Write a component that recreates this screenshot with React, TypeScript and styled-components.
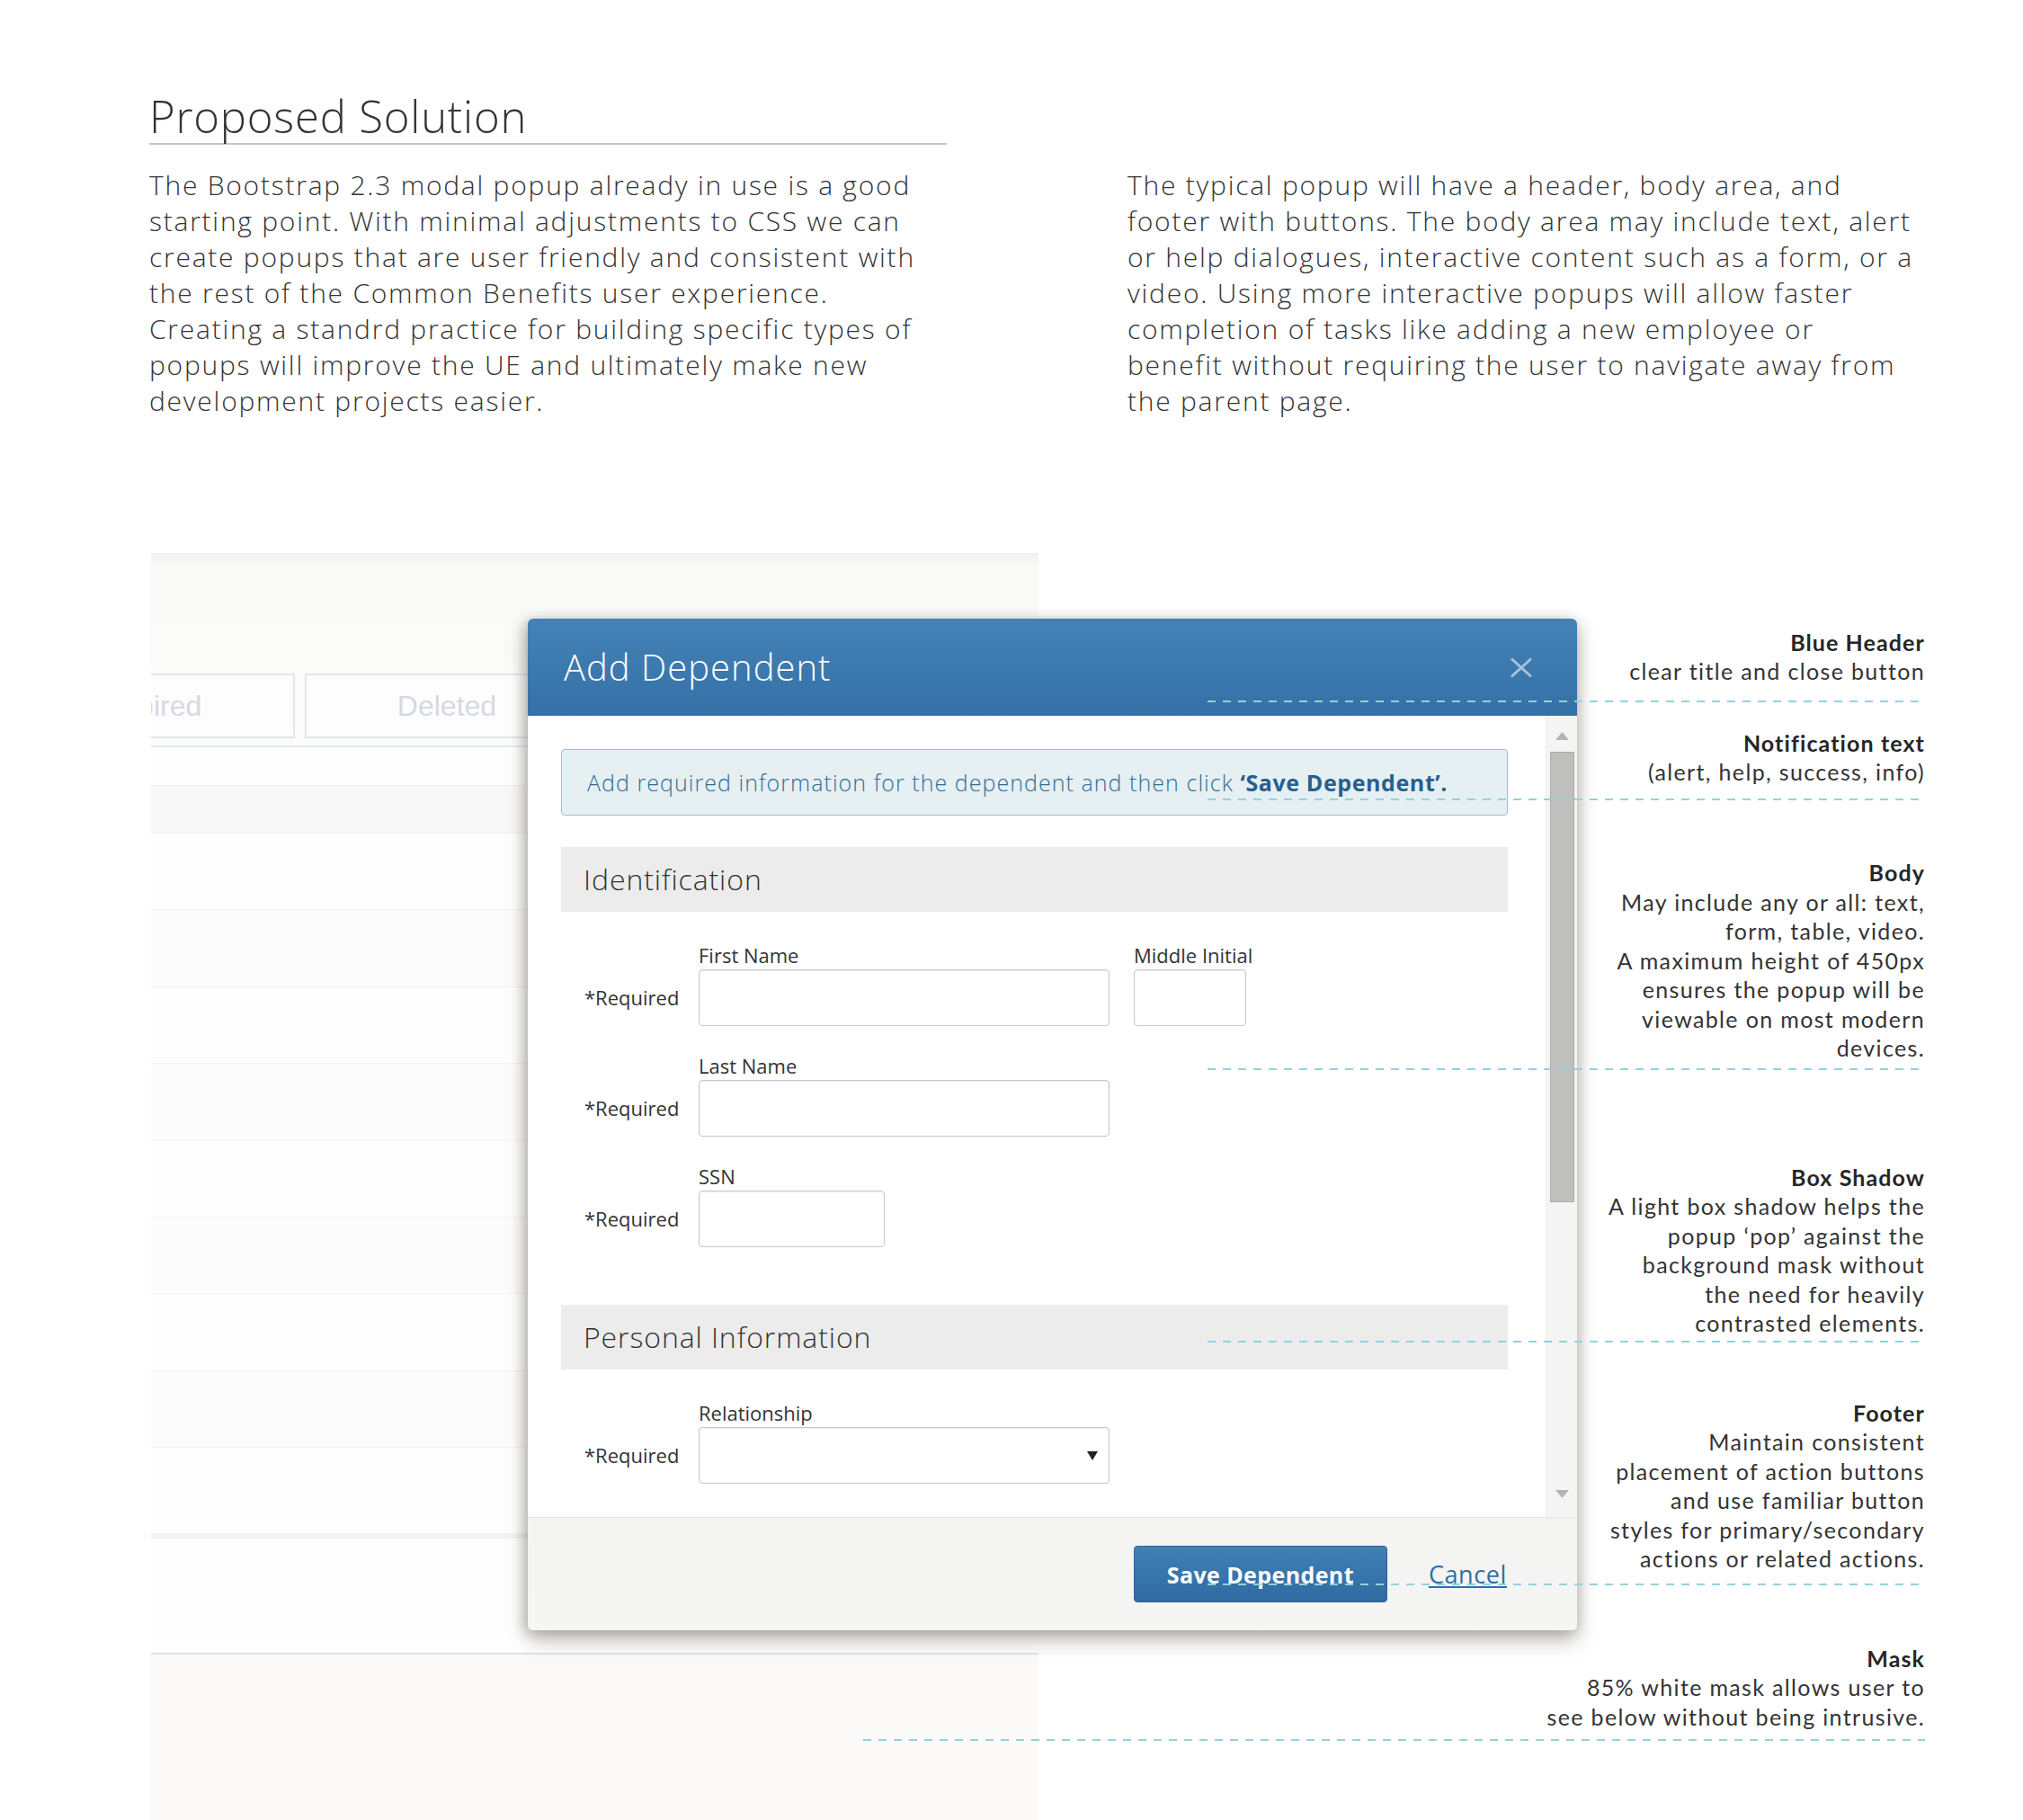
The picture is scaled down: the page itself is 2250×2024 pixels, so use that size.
import React from "react";
import styled, { createGlobalStyle } from "styled-components";

const GlobalStyle = createGlobalStyle`
  html, body { margin: 0; padding: 0; background: #ffffff; overflow: hidden; }
  body { font-family: "Open Sans", "Liberation Sans", sans-serif; color: #333333; }
  *, *::before, *::after { box-sizing: border-box; }
`;

const Page = styled.div`
  width: 2250px;
  height: 2024px;
  overflow: hidden;
  background: #ffffff;
`;

/* ---------- intro ---------- */

const Intro = styled.section`
  display: grid;
  grid-template-columns: 887px 887px;
  column-gap: 201px;
  padding-left: 166px;
`;

const Title = styled.h1`
  grid-column: 1;
  grid-row: 1;
  margin: 0;
  padding-top: 100px;
  font-family: "Open Sans", "Liberation Sans", sans-serif;
  font-weight: 300;
  font-size: 49px;
  line-height: 59px;
  letter-spacing: 0.8px;
  color: #333333;
  border-bottom: 2px solid #c4c4c4;
`;

const Paragraph = styled.p<{ $col: number }>`
  grid-column: ${(p) => p.$col};
  grid-row: 2;
  margin: 25px 0 0;
  font-family: "Open Sans", "Liberation Sans", sans-serif;
  font-weight: 300;
  font-size: 30px;
  line-height: 40px;
  letter-spacing: 1.75px;
  color: #333333;
  white-space: nowrap;
`;

/* ---------- stage ---------- */

const Stage = styled.div`
  position: relative;
  margin-top: 149px;
`;

/* faded application page behind the mask */

const MockApp = styled.div`
  margin-left: 168px;
  width: 987px;
  height: 1409px;
  background: #fcfcfb;
  overflow: hidden;
  display: flex;
  flex-direction: column;
`;

const MockTop = styled.div`
  height: 134px;
  flex: none;
  background: linear-gradient(#f0f0ef 0px, #f9f9f8 14px, #fbfbfa 100%);
`;

const MockTabs = styled.div`
  display: flex;
  gap: 11px;
  height: 72px;
  flex: none;
  margin-left: -156px;
`;

const MockTab = styled.div`
  flex: 0 0 316px;
  border: 2px solid #e2e6ec;
  background: #fdfdfd;
  display: flex;
  align-items: center;
  justify-content: center;
  font-family: "Liberation Sans", Arial, sans-serif;
  font-size: 32px;
  color: #d5d9e2;
`;

const MockTabLine = styled.div`
  margin-top: 8px;
  height: 2px;
  flex: none;
  background: #e7eaee;
`;

const MockGap = styled.div<{ $h: number }>`
  height: ${(p) => p.$h}px;
  flex: none;
  background: #fefefe;
`;

const MockBand = styled.div`
  height: 54px;
  flex: none;
  background: #f8f8f8;
  border-top: 1px solid #efefef;
  border-bottom: 1px solid #efefef;
`;

const MockRow = styled.div<{ $alt: boolean }>`
  height: 85.4px;
  flex: none;
  background: ${(p) => (p.$alt ? "#fdfcfd" : "#fefefe")};
  border-bottom: 1px solid #f3f2f2;
`;

const MockRule = styled.div<{ $h: number; $c: string }>`
  height: ${(p) => p.$h}px;
  flex: none;
  background: ${(p) => p.$c};
`;

const MockBottom = styled.div`
  flex: 1;
  background: #fbfaf9;
`;

/* ---------- modal ---------- */

const Modal = styled.div`
  position: absolute;
  left: 587px;
  top: 73px;
  width: 1167px;
  height: 1125px;
  background: #ffffff;
  border-radius: 6px;
  overflow: hidden;
  display: flex;
  flex-direction: column;
  box-shadow: 0 12px 22px rgba(95, 85, 75, 0.35), -5px 2px 14px rgba(95, 85, 75, 0.28),
    5px 2px 14px rgba(95, 85, 75, 0.12);
`;

const ModalHeader = styled.header`
  height: 108px;
  flex: none;
  display: flex;
  align-items: center;
  justify-content: space-between;
  padding: 0 49px 0 40px;
  background: linear-gradient(#4381b6, #3571a7);
`;

const ModalTitle = styled.h2`
  margin: 0;
  font-family: "Open Sans", "Liberation Sans", sans-serif;
  font-weight: 300;
  font-size: 40px;
  line-height: 108px;
  letter-spacing: 1px;
  color: #ffffff;
`;

const CloseButton = styled.button`
  width: 26px;
  height: 23px;
  padding: 0;
  border: none;
  background: none;
  display: block;
  cursor: pointer;
  svg { display: block; }
`;

const ModalBody = styled.div`
  flex: 1;
  display: flex;
  min-height: 0;
`;

const BodyContent = styled.div`
  flex: 1;
  padding: 37px 42px 0 37px;
  overflow: hidden;
`;

const Alert = styled.div`
  height: 74px;
  border: 1px solid #95c3d2;
  border-radius: 4px;
  background: #e6eff2;
  padding: 0 28px;
  font-family: "Open Sans", "Liberation Sans", sans-serif;
  font-weight: 300;
  font-size: 25px;
  line-height: 72px;
  letter-spacing: 1.05px;
  color: #2f6e98;
  white-space: nowrap;
  strong { font-weight: 700; color: #265f8d; letter-spacing: 0.6px; }
`;

const Section = styled.section<{ $mt: number }>`
  margin-top: ${(p) => p.$mt}px;
`;

const SectionBand = styled.h3`
  margin: 0;
  height: 72px;
  padding-left: 25px;
  background: #ececec;
  font-family: "Open Sans", "Liberation Sans", sans-serif;
  font-weight: 300;
  font-size: 32px;
  line-height: 72px;
  letter-spacing: 0.9px;
  color: #333333;
`;

const FieldList = styled.div`
  padding-top: 32.5px;
  display: flex;
  flex-direction: column;
  gap: 28.5px;
`;

const FieldRow = styled.div`
  display: flex;
  align-items: flex-end;
  padding-left: 26px;
`;

const ReqLabel = styled.span`
  width: 127px;
  flex: none;
  height: 63px;
  line-height: 63px;
  font-size: 22px;
  color: #333333;
  white-space: nowrap;
`;

const FieldGroup = styled.div`
  display: flex;
  gap: 27px;
`;

const Field = styled.label`
  display: flex;
  flex-direction: column;
`;

const FieldLabel = styled.span`
  font-size: 22px;
  line-height: 30px;
  margin-bottom: 1.5px;
  color: #333333;
  white-space: nowrap;
`;

const TextInput = styled.input<{ $w: number }>`
  width: ${(p) => p.$w}px;
  height: 63px;
  border: 1px solid #c7c7c7;
  border-radius: 4px;
  background: #ffffff;
  box-shadow: inset 0 1px 2px rgba(0, 0, 0, 0.07);
  font-size: 22px;
  padding: 0 12px;
  outline: none;
`;

const SelectBox = styled.div<{ $w: number }>`
  width: ${(p) => p.$w}px;
  height: 63px;
  border: 1px solid #c7c7c7;
  border-radius: 4px;
  background: #ffffff;
  box-shadow: inset 0 1px 2px rgba(0, 0, 0, 0.07);
  display: flex;
  align-items: center;
  justify-content: flex-end;
  padding-right: 12px;
  svg { display: block; }
`;

const Scrollbar = styled.div`
  width: 35px;
  flex: none;
  background: #f4f4f4;
  border-left: 1px solid #eeeeee;
  display: flex;
  flex-direction: column;
  align-items: center;
  padding: 18px 0 21px;
  svg { display: block; flex: none; }
`;

const ScrollThumb = styled.div`
  margin-top: 13px;
  width: 27px;
  height: 501px;
  flex: none;
  background: #bfc0be;
  border: 1px solid #aaaaaa;
`;

const ScrollSpacer = styled.div`
  flex: 1;
`;

const ModalFooter = styled.footer`
  height: 126px;
  flex: none;
  background: linear-gradient(#f3f3f2, #f5f5f4);
  border-top: 1px solid #e5e5e4;
  display: flex;
  align-items: center;
  justify-content: flex-end;
  gap: 46px;
  padding-right: 78px;
`;

const PrimaryButton = styled.button`
  width: 282px;
  height: 63px;
  border: 1px solid #2c6399;
  border-radius: 4px;
  background: linear-gradient(#4080b5, #2f6ba2);
  color: #ffffff;
  font-family: "Open Sans", "Liberation Sans", sans-serif;
  font-weight: 700;
  font-size: 25px;
  letter-spacing: 0.4px;
  cursor: pointer;
  padding: 0;
`;

const CancelLink = styled.a`
  font-family: "Open Sans", "Liberation Sans", sans-serif;
  font-size: 27px;
  letter-spacing: 0.6px;
  color: #2f6ea6;
  text-decoration: underline;
  text-underline-offset: 3px;
`;

/* ---------- annotations ---------- */

const Notes = styled.aside`
  position: absolute;
  left: 960px;
  top: 82.5px;
  width: 1181px;
  display: flex;
  flex-direction: column;
  align-items: flex-end;
  z-index: 2;
  pointer-events: none;
`;

const Note = styled.div<{ $mt: number; $pb: number; $w: number }>`
  position: relative;
  width: ${(p) => p.$w}px;
  margin-top: ${(p) => p.$mt}px;
  padding-bottom: ${(p) => p.$pb}px;
  text-align: right;
  font-family: Lato, "Liberation Sans", sans-serif;
  font-size: 25px;
  line-height: 32.5px;
  letter-spacing: 1.35px;
  color: #333333;
  white-space: nowrap;
  &::after {
    content: "";
    position: absolute;
    left: 0;
    right: 0;
    bottom: 0;
    height: 2px;
    background-image: linear-gradient(to right, #93d2db 0 9px, transparent 9px 17px);
    background-size: 17px 2px;
    background-repeat: repeat-x;
  }
`;

const NoteTitle = styled.strong`
  display: block;
  font-weight: 700;
  letter-spacing: 1.1px;
  color: #262626;
`;

/* ---------- icons ---------- */

const CloseIcon = () => (
  <svg width="26" height="23" viewBox="0 0 26 23">
    <path d="M2 1.5 L24 21.5 M24 1.5 L2 21.5" stroke="#a9c1da" strokeWidth="3" strokeLinecap="butt" />
  </svg>
);

const ArrowUp = () => (
  <svg width="15" height="9" viewBox="0 0 15 9">
    <polygon points="7.5,0 15,9 0,9" fill="#b4b4b4" />
  </svg>
);

const ArrowDown = () => (
  <svg width="15" height="9" viewBox="0 0 15 9">
    <polygon points="0,0 15,0 7.5,9" fill="#b4b4b4" />
  </svg>
);

const Caret = () => (
  <svg width="12" height="10" viewBox="0 0 12 10">
    <polygon points="0,0 12,0 6,10" fill="#222222" />
  </svg>
);

/* ---------- data ---------- */

const notes: { title: string; lines: string[]; mt: number; pb: number; w: number }[] = [
  { title: "Blue Header", lines: ["clear title and close button"], mt: 0, pb: 18, w: 798 },
  { title: "Notification text", lines: ["(alert, help, success, info)"], mt: 29, pb: 15.5, w: 798 },
  {
    title: "Body",
    lines: [
      "May include any or all: text,",
      "form, table, video.",
      "A maximum height of 450px",
      "ensures the popup will be",
      "viewable on most modern",
      "devices.",
    ],
    mt: 64,
    pb: 8,
    w: 798,
  },
  {
    title: "Box Shadow",
    lines: [
      "A light box shadow helps the",
      "popup \u2018pop\u2019 against the",
      "background mask without",
      "the need for heavily",
      "contrasted elements.",
    ],
    mt: 103,
    pb: 5.5,
    w: 798,
  },
  {
    title: "Footer",
    lines: [
      "Maintain consistent",
      "placement of action buttons",
      "and use familiar button",
      "styles for primary/secondary",
      "actions or related actions.",
    ],
    mt: 61.5,
    pb: 13,
    w: 798,
  },
  {
    title: "Mask",
    lines: ["85% white mask allows user to", "see below without being intrusive."],
    mt: 65,
    pb: 11,
    w: 1181,
  },
];

const para1 = [
  "The Bootstrap 2.3 modal popup already in use is a good",
  "starting point. With minimal adjustments to CSS we can",
  "create popups that are user friendly and consistent with",
  "the rest of the Common Benefits user experience.",
  "Creating a standrd practice for building specific types of",
  "popups will improve the UE and ultimately make new",
  "development projects easier.",
];

const para2 = [
  "The typical popup will have a header, body area, and",
  "footer with buttons. The body area may include text, alert",
  "or help dialogues, interactive content such as a form, or a",
  "video. Using more interactive popups will allow faster",
  "completion of tasks like adding a new employee or",
  "benefit without requiring the user to navigate away from",
  "the parent page.",
];

const Lines = ({ lines }: { lines: string[] }) => (
  <>
    {lines.map((l, i) => (
      <React.Fragment key={i}>
        {l}
        {i < lines.length - 1 && <br />}
      </React.Fragment>
    ))}
  </>
);

export default function App() {
  return (
    <Page>
      <GlobalStyle />
      <Intro>
        <Title>Proposed Solution</Title>
        <Paragraph $col={1}>
          <Lines lines={para1} />
        </Paragraph>
        <Paragraph $col={2}>
          <Lines lines={para2} />
        </Paragraph>
      </Intro>

      <Stage>
        <MockApp aria-hidden="true">
          <MockTop />
          <MockTabs>
            <MockTab>Expired</MockTab>
            <MockTab>Deleted</MockTab>
            <MockTab>Pending</MockTab>
          </MockTabs>
          <MockTabLine />
          <MockGap $h={42} />
          <MockBand />
          {Array.from({ length: 8 }).map((_, i) => (
            <MockRow key={i} $alt={i % 2 === 1} />
          ))}
          <MockGap $h={95} />
          <MockRule $h={6} $c="#f2f2f1" />
          <MockGap $h={127} />
          <MockRule $h={2} $c="#dee3ea" />
          <MockBottom />
        </MockApp>

        <Modal role="dialog" aria-label="Add Dependent">
          <ModalHeader>
            <ModalTitle>Add Dependent</ModalTitle>
            <CloseButton aria-label="Close">
              <CloseIcon />
            </CloseButton>
          </ModalHeader>

          <ModalBody>
            <BodyContent>
              <Alert>
                Add required information for the dependent and then click{" "}
                <strong>{"\u2018Save Dependent\u2019."}</strong>
              </Alert>

              <Section $mt={35}>
                <SectionBand>Identification</SectionBand>
                <FieldList>
                  <FieldRow>
                    <ReqLabel>*Required</ReqLabel>
                    <FieldGroup>
                      <Field>
                        <FieldLabel>First Name</FieldLabel>
                        <TextInput $w={457} />
                      </Field>
                      <Field>
                        <FieldLabel>Middle Initial</FieldLabel>
                        <TextInput $w={125} />
                      </Field>
                    </FieldGroup>
                  </FieldRow>
                  <FieldRow>
                    <ReqLabel>*Required</ReqLabel>
                    <FieldGroup>
                      <Field>
                        <FieldLabel>Last Name</FieldLabel>
                        <TextInput $w={457} />
                      </Field>
                    </FieldGroup>
                  </FieldRow>
                  <FieldRow>
                    <ReqLabel>*Required</ReqLabel>
                    <FieldGroup>
                      <Field>
                        <FieldLabel>SSN</FieldLabel>
                        <TextInput $w={207} />
                      </Field>
                    </FieldGroup>
                  </FieldRow>
                </FieldList>
              </Section>

              <Section $mt={64}>
                <SectionBand>Personal Information</SectionBand>
                <FieldList>
                  <FieldRow>
                    <ReqLabel>*Required</ReqLabel>
                    <FieldGroup>
                      <Field>
                        <FieldLabel>Relationship</FieldLabel>
                        <SelectBox $w={457}>
                          <Caret />
                        </SelectBox>
                      </Field>
                    </FieldGroup>
                  </FieldRow>
                </FieldList>
              </Section>
            </BodyContent>

            <Scrollbar>
              <ArrowUp />
              <ScrollThumb />
              <ScrollSpacer />
              <ArrowDown />
            </Scrollbar>
          </ModalBody>

          <ModalFooter>
            <PrimaryButton>Save Dependent</PrimaryButton>
            <CancelLink href="#">Cancel</CancelLink>
          </ModalFooter>
        </Modal>

        <Notes>
          {notes.map((n) => (
            <Note key={n.title} $mt={n.mt} $pb={n.pb} $w={n.w}>
              <NoteTitle>{n.title}</NoteTitle>
              <Lines lines={n.lines} />
            </Note>
          ))}
        </Notes>
      </Stage>
    </Page>
  );
}
